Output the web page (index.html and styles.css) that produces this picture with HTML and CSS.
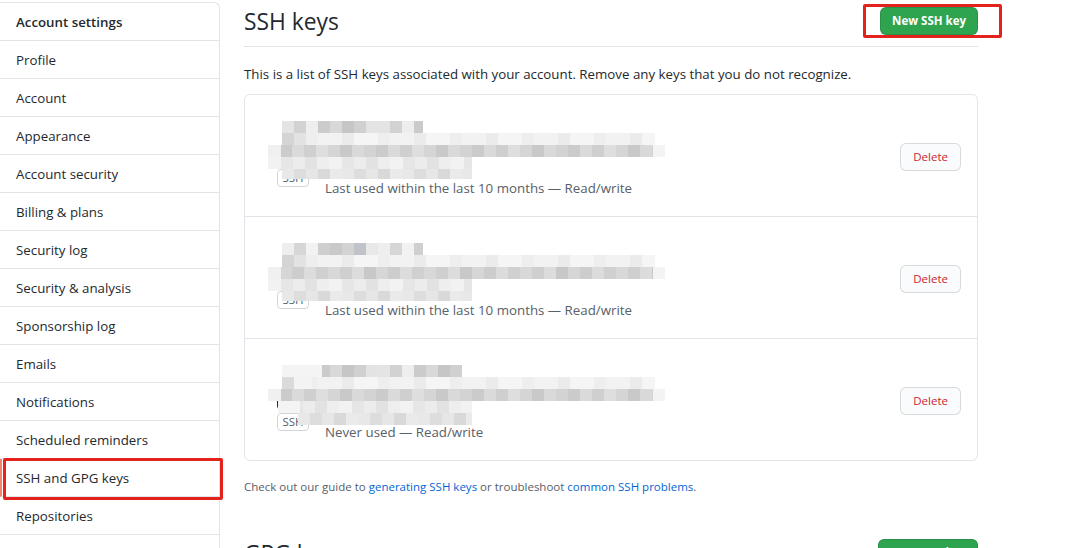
FILE: index.html
```html
<!DOCTYPE html>
<html lang="en">
<head>
<meta charset="utf-8">
<title>SSH and GPG keys</title>
<link rel="stylesheet" href="styles.css">
</head>
<body>
<div class="layout">
  <nav class="menu">
    <div class="menu-heading">Account settings</div>
    <a class="menu-item">Profile</a>
    <a class="menu-item">Account</a>
    <a class="menu-item">Appearance</a>
    <a class="menu-item">Account security</a>
    <a class="menu-item">Billing &amp; plans</a>
    <a class="menu-item">Security log</a>
    <a class="menu-item">Security &amp; analysis</a>
    <a class="menu-item">Sponsorship log</a>
    <a class="menu-item">Emails</a>
    <a class="menu-item">Notifications</a>
    <a class="menu-item">Scheduled reminders</a>
    <a class="menu-item selected">SSH and GPG keys</a>
    <a class="menu-item">Repositories</a>
    <a class="menu-item">Organizations</a>
  </nav>

  <main class="content">
    <div class="subhead">
      <h2 class="subhead-title">SSH keys</h2>
      <button class="btn btn-primary">New SSH key</button>
    </div>
    <p class="intro">This is a list of SSH keys associated with your account. Remove any keys that you do not recognize.</p>

    <div class="box">
      <div class="key-row">
        <div class="key-icon-col">
          <svg class="key-icon" viewBox="0 0 16 16" width="32" height="32"><path fill="#24292e" d="M10.5 0a5.499 5.499 0 11-1.288 10.848l-.932.932a.75.75 0 01-.53.22H7v.75a.75.75 0 01-.22.53l-.5.5a.75.75 0 01-.53.22H5v.75a.75.75 0 01-.22.53l-.5.5a.75.75 0 01-.53.22h-2A1.75 1.75 0 010 14.25v-2c0-.199.079-.389.22-.53l4.932-4.932A5.5 5.5 0 0110.5 0zm-4 5.5c-.001.431.069.86.205 1.269a.75.75 0 01-.181.768L1.5 12.560v1.69c0 .138.112.25.25.25h1.690l.06-.06v-1.19a.75.75 0 01.75-.75h1.19l.06-.06v-1.19a.75.75 0 01.75-.75h1.19l1.023-1.025a.75.75 0 01.768-.18A4 4 0 106.5 5.5zM11 6a1 1 0 100-2 1 1 0 000 2z"/></svg>
          <span class="label">SSH</span>
        </div>
        <div class="key-details">
          <div class="hidden-info"></div>
          <div class="key-meta">Last used within the last 10 months — Read/write</div>
        </div>
        <button class="btn btn-danger">Delete</button>
        <div class="mosaic">
          <div class="m r1"></div><div class="m r2"></div><div class="m r3"></div><div class="m r4"></div><div class="m r5"></div>
        </div>
      </div>

      <div class="key-row">
        <div class="key-icon-col">
          <svg class="key-icon" viewBox="0 0 16 16" width="32" height="32"><path fill="#24292e" d="M10.5 0a5.499 5.499 0 11-1.288 10.848l-.932.932a.75.75 0 01-.53.22H7v.75a.75.75 0 01-.22.53l-.5.5a.75.75 0 01-.53.22H5v.75a.75.75 0 01-.22.53l-.5.5a.75.75 0 01-.53.22h-2A1.75 1.75 0 010 14.25v-2c0-.199.079-.389.22-.53l4.932-4.932A5.5 5.5 0 0110.5 0zm-4 5.5c-.001.431.069.86.205 1.269a.75.75 0 01-.181.768L1.5 12.560v1.69c0 .138.112.25.25.25h1.690l.06-.06v-1.19a.75.75 0 01.75-.75h1.19l.06-.06v-1.19a.75.75 0 01.75-.75h1.19l1.023-1.025a.75.75 0 01.768-.18A4 4 0 106.5 5.5zM11 6a1 1 0 100-2 1 1 0 000 2z"/></svg>
          <span class="label">SSH</span>
        </div>
        <div class="key-details">
          <div class="hidden-info"></div>
          <div class="key-meta">Last used within the last 10 months — Read/write</div>
        </div>
        <button class="btn btn-danger">Delete</button>
        <div class="mosaic">
          <div class="m r1 alt"></div><div class="m r2"></div><div class="m r3 alt"></div><div class="m r4"></div><div class="m r5"></div>
        </div>
      </div>

      <div class="key-row">
        <div class="key-icon-col">
          <svg class="key-icon" viewBox="0 0 16 16" width="32" height="32"><path fill="#24292e" d="M10.5 0a5.499 5.499 0 11-1.288 10.848l-.932.932a.75.75 0 01-.53.22H7v.75a.75.75 0 01-.22.53l-.5.5a.75.75 0 01-.53.22H5v.75a.75.75 0 01-.22.53l-.5.5a.75.75 0 01-.53.22h-2A1.75 1.75 0 010 14.25v-2c0-.199.079-.389.22-.53l4.932-4.932A5.5 5.5 0 0110.5 0zm-4 5.5c-.001.431.069.86.205 1.269a.75.75 0 01-.181.768L1.5 12.560v1.69c0 .138.112.25.25.25h1.690l.06-.06v-1.19a.75.75 0 01.75-.75h1.19l.06-.06v-1.19a.75.75 0 01.75-.75h1.19l1.023-1.025a.75.75 0 01.768-.18A4 4 0 106.5 5.5zM11 6a1 1 0 100-2 1 1 0 000 2z"/></svg>
          <span class="label">SSH</span>
        </div>
        <div class="key-details">
          <div class="hidden-info"></div>
          <div class="key-meta">Never used — Read/write</div>
        </div>
        <button class="btn btn-danger">Delete</button>
        <div class="mosaic mosaic-b">
          <div class="m r1"></div><div class="m r2"></div><div class="m r3"></div><div class="m r4"></div><div class="m r5"></div>
        </div>
      </div>
    </div>

    <p class="guide">Check out our guide to <a class="link">generating SSH keys</a> or troubleshoot <a class="link">common SSH problems</a>.</p>

    <div class="subhead subhead-spacious">
      <h2 class="subhead-title">GPG keys</h2>
      <button class="btn btn-primary">New GPG key</button>
    </div>
  </main>
</div>

<div class="annot annot-nav"></div>
<div class="annot annot-btn"></div>
</body>
</html>
```

FILE: styles.css
```css
* { box-sizing: border-box; }

html, body {
  margin: 0;
  padding: 0;
  background: #fff;
  overflow: hidden;
  height: 548px;
}

body {
  font-family: "Open Sans", "Noto Sans", Arial, sans-serif;
  font-size: 13.3px;
  line-height: 1.5;
  color: #24292e;
  position: relative;
}

.layout {
  display: flex;
  gap: 24px;
  align-items: flex-start;
}

/* ---------- sidebar ---------- */
.menu {
  width: 220px;
  flex: none;
  margin-top: 2px;
  border-top: 1px solid #e1e4e8;
  border-right: 1px solid #e1e4e8;
  border-top-right-radius: 6px;
  display: flex;
  flex-direction: column;
}

.menu-heading,
.menu-item {
  display: block;
  padding: 9px 16px 7px;
  line-height: 21px;
  border-bottom: 1px solid #e1e4e8;
  color: #24292e;
  text-decoration: none;
}

.menu-heading {
  font-weight: 600;
}

.menu-item.selected {
  border-left: 2px solid #f9826c;
  padding-left: 14px;
}

/* ---------- main ---------- */
.content {
  width: 734px;
  flex: none;
  padding-top: 4px;
}

.subhead {
  display: flex;
  align-items: flex-start;
  justify-content: space-between;
  border-bottom: 1px solid #e1e4e8;
  padding-bottom: 6px;
}

.subhead-title {
  margin: 0;
  font-size: 22.8px;
  font-weight: 400;
  line-height: 36px;
}

.subhead .btn {
  margin-top: 3px;
}

.subhead-spacious {
  margin-top: 39px;
}

.btn {
  font-family: inherit;
  font-size: 11.5px;
  line-height: 20px;
  padding: 3px 11px;
  border-radius: 6px;
  cursor: pointer;
}

.btn-primary {
  color: #fff;
  background: #2ea44f;
  border: 1px solid rgba(27, 31, 35, 0.15);
  font-weight: 700;
}

.btn-danger {
  color: #cb2431;
  background: #fafbfc;
  border: 1px solid rgba(27, 31, 35, 0.15);
  font-weight: 400;
  padding: 3px 12px;
  margin-top: 2px;
}

.intro {
  margin: 17px 0 9px;
  line-height: 21px;
}

.box {
  border: 1px solid #e1e4e8;
  border-radius: 6px;
}

.key-row {
  position: relative;
  height: 122px;
  display: flex;
  align-items: center;
  padding: 0 16px;
  border-top: 1px solid #e1e4e8;
}

.key-row:first-child {
  border-top: 0;
  height: 121px;
}

.key-icon-col {
  display: flex;
  flex-direction: column;
  align-items: center;
  padding: 0 16px;
  width: 64px;
  flex: none;
  margin-top: 8px;
}

.key-icon {
  display: block;
  margin-bottom: 4px;
}

.label {
  display: inline-block;
  font-size: 11.5px;
  line-height: 16px;
  padding: 0 4px;
  border: 1px solid #d1d5da;
  border-radius: 4px;
  color: #586069;
}

.key-details {
  flex: 1;
  padding-top: 10px;
}

.hidden-info {
  height: 56px;
}

.key-meta {
  color: #586069;
  line-height: 21px;
}

/* pixelated cover over private key info */
.mosaic {
  position: absolute;
  left: 23px;
  top: 26px;
  display: flex;
  flex-direction: column;
}

.m { height: 12px; }

.r1 {
  margin-left: 14px;
  width: 141px;
  background: repeating-linear-gradient(90deg,
    #e4e4e4 0 12px, #d2d2d2 12px 24px, #eeeeee 24px 36px, #cbcbcb 36px 48px,
    #d8d8d8 48px 60px, #c6c6c6 60px 72px, #d0d0d0 72px 84px, #e3e3e3 84px 96px);
}

.r1.alt {
  background: repeating-linear-gradient(90deg,
    #eeeeee 0 12px, #d6d6d6 12px 24px, #f2f2f2 24px 36px, #cfcfcf 36px 48px,
    #c9c9c9 48px 60px, #d3d3d3 60px 72px, #c0c4ca 72px 84px, #e8e8e8 84px 96px);
}

.r2 {
  margin-left: 14px;
  width: 373px;
  background:
    linear-gradient(90deg, #d4d4d4 0 12px, #e2e2e2 12px 24px, transparent 24px),
    repeating-linear-gradient(90deg, #f5f5f5 0 24px, #eeeeee 24px 36px, #f2f2f2 36px 60px, #ebebeb 60px 72px);
}

.r3 {
  width: 397px;
  background:
    linear-gradient(90deg, #f0f0f0 0 13px, transparent 13px, transparent 385px, #f3f3f3 385px),
    repeating-linear-gradient(90deg,
      #d3d3d3 0 12px, #cbcbcb 12px 24px, #dadada 24px 36px, #cfcfcf 36px 48px,
      #dedede 48px 60px, #d5d5d5 60px 72px, #c9c9c9 72px 84px, #d9d9d9 84px 96px);
}

.r3.alt {
  background:
    linear-gradient(90deg, #f0f0f0 0 13px, transparent 13px, transparent 385px, #f3f3f3 385px),
    repeating-linear-gradient(90deg,
      #c8c8c8 0 12px, #d6d6d6 12px 24px, #cdcdcd 24px 36px, #dcdcdc 36px 48px,
      #d0d0d0 48px 60px, #d8d8d8 60px 72px, #cfcfcf 72px 84px, #dcdcdc 84px 96px);
}

.r4 {
  width: 204px;
  background: repeating-linear-gradient(90deg,
    #f2f2f2 0 13px, #e6e6e6 13px 25px, #ececec 25px 37px, #e2e2e2 37px 49px, #eeeeee 49px 61px);
}

.r5 {
  margin-left: 14px;
  width: 190px;
  height: 10px;
  background: repeating-linear-gradient(90deg,
    #e8e8e8 0 12px, #dddddd 12px 24px, #e6e6e6 24px 36px, #d9d9d9 36px 48px, #eaeaea 48px 60px);
}

.mosaic-b .r1 {
  width: 180px;
  background:
    linear-gradient(90deg, #f4f4f4 0 40px, transparent 40px),
    repeating-linear-gradient(90deg,
      #e4e4e4 0 12px, #d2d2d2 12px 24px, #eeeeee 24px 36px, #cbcbcb 36px 48px,
      #d8d8d8 48px 60px, #c6c6c6 60px 72px, #d0d0d0 72px 84px, #e3e3e3 84px 96px);
}

.mosaic-b .r2 {
  background:
    linear-gradient(90deg, #dadada 0 12px, #f3f3f3 12px 30px, transparent 30px),
    repeating-linear-gradient(90deg, #f5f5f5 0 24px, #eeeeee 24px 36px, #f2f2f2 36px 60px, #ebebeb 60px 72px);
}

.mosaic-b .r4 {
  margin-left: 10px;
  width: 194px;
  background:
    linear-gradient(90deg, #f4f4f4 0 22px, transparent 22px),
    repeating-linear-gradient(90deg,
      #f2f2f2 0 13px, #e6e6e6 13px 25px, #ececec 25px 37px, #e2e2e2 37px 49px, #eeeeee 49px 61px);
}

.mosaic-b .r5 {
  margin-left: 30px;
  width: 174px;
  height: 12px;
}

.guide {
  margin: 16px 0 0;
  font-size: 11.5px;
  line-height: 20px;
  color: #586069;
}

.link {
  color: #0366d6;
  text-decoration: none;
}

/* ---------- screenshot annotations ---------- */
.annot {
  position: absolute;
  border: 3px solid #e3221c;
  border-radius: 2px;
}

.annot-nav {
  left: 3px;
  top: 458px;
  width: 220px;
  height: 42px;
}

.annot-btn {
  left: 863px;
  top: 4px;
  width: 139px;
  height: 34px;
}
```
